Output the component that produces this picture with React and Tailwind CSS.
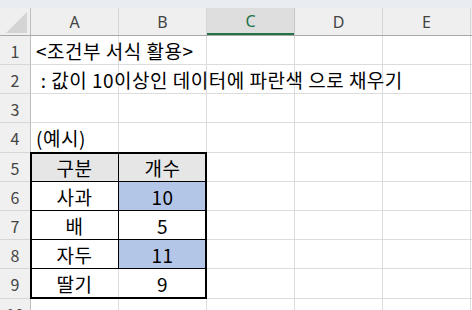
import React from "react";

const COLS = ["A", "B", "C", "D", "E"];

// row number, height, cells A..E
const ROWS = [
  { n: 1, h: "h-[29px]", a: "<조건부 서식 활용>" },
  { n: 2, h: "h-[29px]", a: " : 값이 10이상인 데이터에 파란색 으로 채우기" },
  { n: 3, h: "h-[29px]" },
  { n: 4, h: "h-[30px]", a: "(예시)", tableTop: true },
  { n: 5, h: "h-[29px]", t: ["구분", "개수"], head: true },
  { n: 6, h: "h-[29px]", t: ["사과", "10"], hit: true },
  { n: 7, h: "h-[29px]", t: ["배", "5"] },
  { n: 8, h: "h-[29px]", t: ["자두", "11"], hit: true },
  { n: 9, h: "h-[30px]", t: ["딸기", "9"], last: true },
  { n: 10, h: "h-[29px]" },
];

function ColHeader({ label, selected }) {
  if (selected) {
    return (
      <div className="w-[88px] shrink-0 border-r border-[#c6c6c6] bg-[#dedede] flex flex-col">
        <div className="flex-1 flex items-center justify-center text-[16px] text-[#217346] pt-[1px]">{label}</div>
        <div className="h-[2px] bg-[#217346]" />
      </div>
    );
  }
  return (
    <div className="w-[88px] shrink-0 border-r border-[#d6d6d6] flex items-center justify-center text-[16px] text-[#444444] pt-[1px]">
      {label}
    </div>
  );
}

function Row({ row }) {
  const inTable = !!row.t;
  const aBorder = inTable && !row.last ? "border-r-black border-b-black" : row.tableTop ? "border-r-[#dcdcdc] border-b-black" : "border-r-[#dcdcdc] border-b-[#dcdcdc]";
  const bBorder = inTable && !row.last ? "border-b-black border-r-[#dcdcdc]" : row.tableTop ? "border-b-black border-r-[#dcdcdc]" : "border-r-[#dcdcdc] border-b-[#dcdcdc]";
  const aBg = row.head ? "bg-[#e7e6e6]" : "bg-white";
  const bBg = row.head ? "bg-[#e7e6e6]" : row.hit ? "bg-[#b4c6e7]" : "bg-white";
  return (
    <div className={`flex ${row.h}`}>
      <div className="w-[31px] shrink-0 border-r border-b border-r-[#bdbdbd] border-b-[#d6d6d6] bg-[#f0f0f0] flex items-center justify-center text-[16px] tracking-normal text-[#444444] pt-[1px]">
        {row.n}
      </div>
      <div className={`relative w-[88px] shrink-0 border-r border-b ${aBorder} ${aBg} flex items-center ${inTable ? "justify-center" : ""}`}>
        {inTable ? (
          <span>{row.t[0]}</span>
        ) : row.a ? (
          <span className="absolute left-[5px] whitespace-pre z-10">{row.a}</span>
        ) : null}
      </div>
      <div className={`w-[88px] shrink-0 border-r border-b ${bBorder} ${bBg} flex items-center justify-center`}>
        {inTable ? <span>{row.t[1]}</span> : null}
      </div>
      <div className="w-[88px] shrink-0 border-r border-b border-[#dcdcdc]" />
      <div className="w-[88px] shrink-0 border-r border-b border-[#dcdcdc]" />
      <div className="w-[88px] shrink-0 border-r border-b border-[#dcdcdc]" />
      <div className="flex-1 border-b border-[#dcdcdc]" />
    </div>
  );
}

export default function App() {
  return (
    <div
      className="w-[472px] h-[310px] overflow-hidden bg-white text-black text-[19px] tracking-[0.5px] leading-none"
      style={{ fontFamily: '"Noto Sans CJK KR", "Noto Sans", sans-serif' }}
    >
      <div className="h-[8px] bg-[#e9edf1]" />
      <div className="flex h-[28px] bg-[#efefef] border-b border-[#a8a8a8] tracking-normal" style={{ fontFamily: '"Noto Sans", "Open Sans", sans-serif' }}>
        <div className="w-[31px] shrink-0 border-r border-[#bdbdbd] flex items-end justify-end pr-[3px] pb-[2px]">
          <svg width="21" height="21" viewBox="0 0 21 21">
            <polygon points="21,0 21,21 0,21" fill="#d4d4d4" />
          </svg>
        </div>
        {COLS.map((c) => (
          <ColHeader key={c} label={c} selected={c === "C"} />
        ))}
        <div className="flex-1" />
      </div>
      <div className="relative">
        {ROWS.map((r) => (
          <Row key={r.n} row={r} />
        ))}
        {/* thick outline of the sample table A5:B9 */}
        <div className="absolute left-[30px] top-[116px] w-[177px] h-[147px] border-2 border-black pointer-events-none" />
      </div>
    </div>
  );
}
